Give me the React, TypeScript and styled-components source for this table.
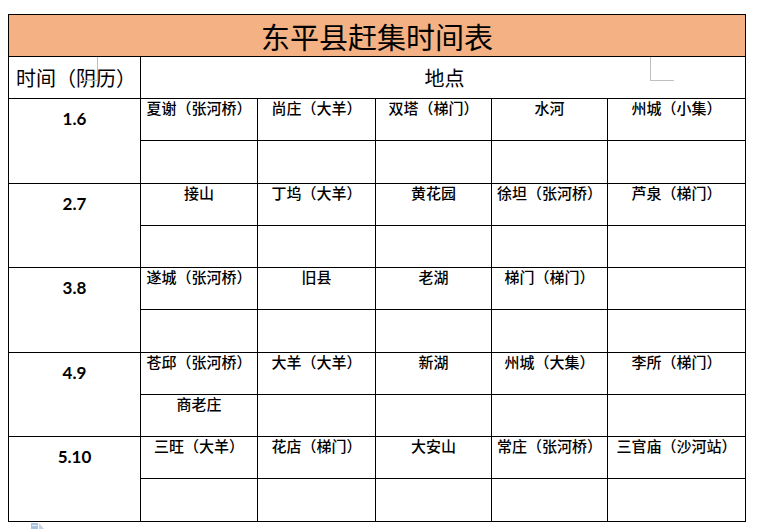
import styled, { createGlobalStyle } from "styled-components";

const GlobalStyle = createGlobalStyle`
  html, body {
    margin: 0;
    padding: 0;
    background: #ffffff;
  }
  body {
    font-family: "Noto Sans CJK SC", "Noto Sans", sans-serif;
    color: #000000;
  }
`;

const Page = styled.div`
  position: relative;
  width: 757px;
  height: 529px;
  overflow: hidden;
  padding: 14px 0 0 8px;
  box-sizing: border-box;
`;

const Sheet = styled.table`
  border-collapse: collapse;
  table-layout: fixed;
  width: 738px;
`;

const Cell = styled.td`
  border: 1px solid #000000;
  padding: 0;
  box-sizing: border-box;
`;

const TitleCell = styled(Cell)`
  height: 42px;
  background: #f4b183;
  text-align: center;
  vertical-align: middle;
  font-size: 29px;
  line-height: 34px;
`;

const HeadCell = styled(Cell)`
  height: 42px;
  text-align: center;
  vertical-align: middle;
  font-size: 20px;
  line-height: 24px;
  padding-left: 3px;
`;

const DateCell = styled(Cell)`
  vertical-align: top;
  text-align: center;
  padding-top: 10px;
  font-family: Lato, "Liberation Sans", sans-serif;
  font-weight: 700;
  font-size: 17px;
  line-height: 20px;
`;

const PlaceCell = styled(Cell)<{ $lower: boolean }>`
  height: ${({ $lower }) => ($lower ? "42.6px" : "42px")};
  vertical-align: top;
  text-align: center;
  white-space: nowrap;
  overflow: hidden;
  font-size: 15px;
  font-weight: 500;
  line-height: 18px;
`;

const CornerMark = styled.div<{ $side: "left" | "right" }>`
  position: absolute;
  top: 57px;
  left: ${({ $side }) => ($side === "left" ? "82px" : "650px")};
  width: ${({ $side }) => ($side === "left" ? "16px" : "24px")};
  height: 24px;
  box-sizing: border-box;
  border-bottom: 1px solid #bfbfbf;
  ${({ $side }) =>
    $side === "left"
      ? "border-right: 1px solid #bfbfbf;"
      : "border-left: 1px solid #bfbfbf;"}
  pointer-events: none;
`;

const PasteIcon = styled.svg`
  position: absolute;
  left: 31px;
  top: 522px;
`;

type Market = {
  date: string;
  first: string[];
  second: string[];
};

const MARKETS: Market[] = [
  {
    date: "1.6",
    first: ["夏谢（张河桥）", "尚庄（大羊）", "双塔（梯门）", "水河", "州城（小集）"],
    second: ["", "", "", "", ""],
  },
  {
    date: "2.7",
    first: ["接山", "丁坞（大羊）", "黄花园", "徐坦（张河桥）", "芦泉（梯门）"],
    second: ["", "", "", "", ""],
  },
  {
    date: "3.8",
    first: ["遂城（张河桥）", "旧县", "老湖", "梯门（梯门）", ""],
    second: ["", "", "", "", ""],
  },
  {
    date: "4.9",
    first: ["苍邱（张河桥）", "大羊（大羊）", "新湖", "州城（大集）", "李所（梯门）"],
    second: ["商老庄", "", "", "", ""],
  },
  {
    date: "5.10",
    first: ["三旺（大羊）", "花店（梯门）", "大安山", "常庄（张河桥）", "三官庙（沙河站）"],
    second: ["", "", "", "", ""],
  },
];

const COLUMN_WIDTHS = [132, 117, 118, 116, 116, 138];

export default function App() {
  return (
    <>
      <GlobalStyle />
      <Page>
        <Sheet>
          <colgroup>
            {COLUMN_WIDTHS.map((w, i) => (
              <col key={i} style={{ width: w }} />
            ))}
          </colgroup>
          <tbody>
            <tr>
              <TitleCell colSpan={6}>东平县赶集时间表</TitleCell>
            </tr>
            <tr>
              <HeadCell>时间（阴历）</HeadCell>
              <HeadCell colSpan={5}>地点</HeadCell>
            </tr>
            {MARKETS.flatMap((m) => [
              <tr key={`${m.date}-a`}>
                <DateCell rowSpan={2}>{m.date}</DateCell>
                {m.first.map((place, i) => (
                  <PlaceCell key={i} $lower={false}>
                    {place}
                  </PlaceCell>
                ))}
              </tr>,
              <tr key={`${m.date}-b`}>
                {m.second.map((place, i) => (
                  <PlaceCell key={i} $lower={true}>
                    {place}
                  </PlaceCell>
                ))}
              </tr>,
            ])}
          </tbody>
        </Sheet>
        <CornerMark $side="left" />
        <CornerMark $side="right" />
        <PasteIcon width="14" height="8" viewBox="0 0 14 8">
          <rect x="0" y="1" width="7" height="7" fill="#a9c2e0" />
          <rect x="1" y="3" width="5" height="1" fill="#e6eef8" />
          <path d="M8 1 L13 7 L8 7 Z" fill="#c4d4ea" />
        </PasteIcon>
      </Page>
    </>
  );
}
